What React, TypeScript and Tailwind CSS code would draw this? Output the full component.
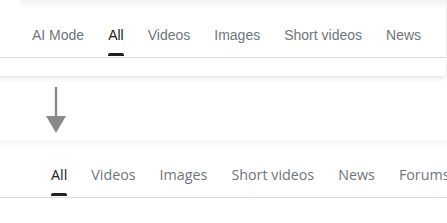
import React from "react";

const topTabs = ["AI Mode", "All", "Videos", "Images", "Short videos", "News"];
const bottomTabs = ["All", "Videos", "Images", "Short videos", "News", "Forums"];

function TabRow({ tabs, active, font, pl }: { tabs: string[]; active: string; font: string; pl: string }) {
  return (
    <div className={`flex gap-6 border-b border-[#dadce0] ${pl}`}>
      {tabs.map((t) => (
        <div key={t} className={`flex flex-col items-stretch whitespace-nowrap pt-[25px] leading-5 ${font} ${t === active ? "text-[#202124]" : "text-[#70757a]"}`}>
          <span>{t}</span>
          <div className={`mt-[8px] mb-[1px] h-[3px] rounded-t-[2px] ${t === active ? "bg-[#202124]" : "bg-transparent"}`} />
        </div>
      ))}
    </div>
  );
}

export default function App() {
  return (
    <div className="relative h-[223px] w-[447px] overflow-hidden bg-white">
      <div className="ml-[-20px] h-[76px] w-[466px] bg-white shadow-[0_1px_6px_rgba(0,0,0,0.14)]">
        <TabRow tabs={topTabs} active="All" font="text-[14px] font-['Liberation_Sans',Arial,sans-serif]" pl="pl-[52px]" />
      </div>
      <div className="pointer-events-none absolute left-[20px] right-0 top-0 h-[9px] bg-gradient-to-b from-black/[0.05] to-transparent" />
      <div className="mt-[11px] pl-[45px]">
        <svg width="22" height="47" viewBox="0 0 22 47">
          <rect x="9.8" y="0" width="2.4" height="30" fill="#8a8a8a" />
          <polygon points="1,29 21,29 11,46" fill="#8a8a8a" />
        </svg>
      </div>
      <div className="mt-[6px] bg-gradient-to-b from-[#f7f7f7] via-white via-[14%] to-white">
        <TabRow tabs={bottomTabs} active="All" font="text-[14.3px] font-['Open_Sans',sans-serif]" pl="pl-[51px]" />
      </div>
    </div>
  );
}
